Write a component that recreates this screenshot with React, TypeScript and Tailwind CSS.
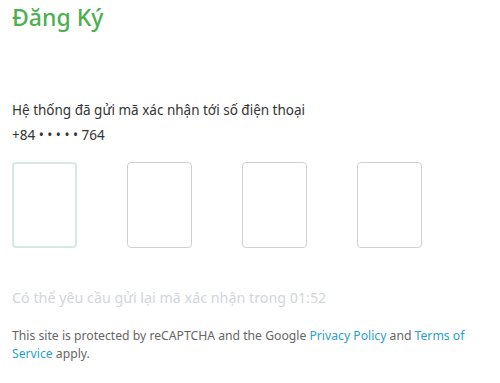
export default function App() {
  const font = { fontFamily: '"Noto Sans", "Open Sans", sans-serif' };
  return (
    <div className="w-[500px] h-[383px] bg-white overflow-hidden px-3" style={font}>
      <h1 className="text-[23px] leading-[30px] text-[#4caf50] pt-[2px] font-medium">Đăng Ký</h1>
      <div className="mt-[68px] text-[13.5px] leading-[20px] text-[#333]">
        <p>Hệ thống đã gửi mã xác nhận tới số điện thoại</p>
        <p className="mt-[5px]">+84 • • • • • 764</p>
      </div>
      <div className="mt-[17px] flex gap-[50px]">
        <div className="w-[65px] h-[86px] rounded-[4px] border-2 border-[#d6e9e0]" />
        <div className="w-[65px] h-[86px] rounded-[4px] border border-[#d0d0d0]" />
        <div className="w-[65px] h-[86px] rounded-[4px] border border-[#d0d0d0]" />
        <div className="w-[65px] h-[86px] rounded-[4px] border border-[#d0d0d0]" />
      </div>
      <p className="mt-[40px] text-[14.3px] leading-[20px] text-[#d2d6dc]">Có thể yêu cầu gửi lại mã xác nhận trong 01:52</p>
      <p className="mt-[19px] text-[12.2px] leading-[18px] text-[#666] w-[470px]">
        This site is protected by reCAPTCHA and the Google <a className="text-[#2a9fc9]">Privacy Policy</a> and <a className="text-[#2a9fc9]">Terms of Service</a> apply.
      </p>
    </div>
  );
}
